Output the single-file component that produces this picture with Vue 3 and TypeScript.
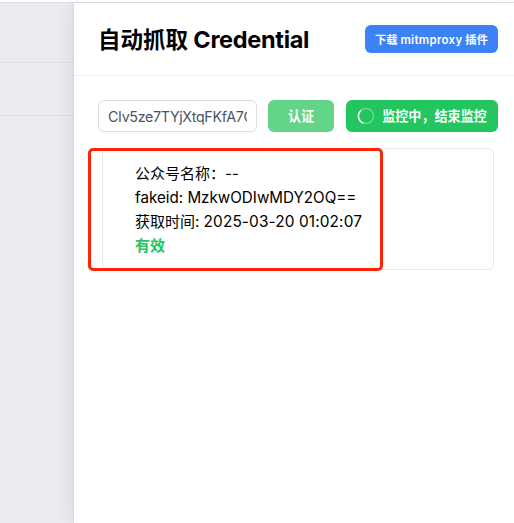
<script setup lang="ts">
import { ref } from 'vue'

interface Credential {
  nickname: string
  fakeid: string
  time: string
  valid: boolean
}

const token = ref('CIv5ze7TYjXtqFKfA7Q')
const credentials = ref<Credential[]>([
  { nickname: '--', fakeid: 'MzkwODIwMDY2OQ==', time: '2025-03-20 01:02:07', valid: true },
])
</script>

<template>
  <div class="page" lang="zh-CN">
    <aside class="backdrop">
      <div class="row first"></div>
      <div class="row second"></div>
    </aside>
    <main class="panel">
      <header class="header">
        <h1 class="title">自动抓取 <span class="title-latin">Credential</span></h1>
        <button class="btn download">下载 <span class="plugin">mitmproxy</span> 插件</button>
      </header>
      <section class="content">
        <div class="toolbar">
          <div class="input"><span class="value">{{ token }}</span></div>
          <button class="btn auth">认证</button>
          <button class="btn monitor">
            <svg class="spinner" viewBox="0 0 18 18" fill="none">
              <circle cx="9" cy="9" r="7.6" stroke="#fff" stroke-opacity=".3" stroke-width="1.5" />
              <path d="M6.4 16.1A7.6 7.6 0 0 1 4.1 3.2" stroke="#fff" stroke-width="1.5" />
            </svg>
            <span>监控中，结束监控</span>
          </button>
        </div>
        <div v-for="item in credentials" :key="item.fakeid" class="card">
          <p class="name">公众号名称：<span class="dashes">{{ item.nickname }}</span></p>
          <p class="fakeid">fakeid: {{ item.fakeid }}</p>
          <p class="time">获取时间: <span class="stamp">{{ item.time }}</span></p>
          <p v-if="item.valid" class="valid">有效</p>
          <div class="highlight"></div>
        </div>
      </section>
    </main>
  </div>
</template>

<style>
body {
  background: #fff;
}
</style>

<style scoped>
* {
  box-sizing: border-box;
}
.page {
  display: flex;
  width: 514px;
  height: 523px;
  overflow: hidden;
  border-top: 2px solid #fcfcfc;
  background: #ebecf0;
  font-family: Inter, "Noto Sans CJK SC", sans-serif;
  color: #000;
}
.backdrop {
  width: 74px;
  flex: none;
  border-top: 1px solid #e0e1e4;
}
.row {
  border-bottom: 1px solid #dfe0e4;
}
.first {
  height: 60px;
}
.second {
  height: 53px;
}
.panel {
  flex: 1;
  min-width: 0;
  margin-top: 1px;
  background: #fff;
  box-shadow: 0 0 2px rgb(0 0 0 / 14%), -3px 0 18px rgb(0 0 0 / 8%);
}
.header {
  display: flex;
  align-items: center;
  justify-content: space-between;
  height: 73px;
  padding: 0 16px 0 24px;
  border-bottom: 1px solid #f0f0f1;
}
.title {
  margin: 2px 0 0;
  font-size: 22.5px;
  line-height: 32px;
  font-weight: 700;
  white-space: nowrap;
}
.title-latin {
  font-size: 23.5px;
  font-weight: 650;
  letter-spacing: -0.3px;
}
.btn {
  display: flex;
  align-items: center;
  justify-content: center;
  flex: none;
  padding: 0;
  border: 0;
  border-radius: 6px;
  color: #fff;
  font: 600 13.1px/20px Inter, "Noto Sans CJK SC", sans-serif;
  white-space: pre;
}
.download {
  width: 133px;
  height: 28px;
  padding-top: 1px;
  background: #3b82f6;
  font-size: 11.3px;
}
.plugin {
  font-size: 11.5px;
  letter-spacing: 0.3px;
}
.content {
  padding: 24px 16px 0 24px;
}
.toolbar {
  display: flex;
  height: 32px;
}
.input {
  width: 159px;
  padding: 0 9px;
  border: 1px solid #dcdee4;
  border-radius: 6px;
  box-shadow: 0 1px 2px rgb(0 0 0 / 4%);
}
.value {
  display: block;
  overflow: hidden;
  color: #4b5563;
  font-size: 14.3px;
  letter-spacing: -0.35px;
  line-height: 31px;
  white-space: nowrap;
}
.auth {
  width: 66px;
  margin-left: 11px;
  background: #64d488;
}
.monitor {
  width: 152px;
  margin-left: 12px;
  background: #22c55e;
}
.spinner {
  width: 18px;
  height: 18px;
  margin-right: 7px;
}
.card {
  position: relative;
  width: 392px;
  height: 122px;
  margin: 16px 0 0 4px;
  padding: 13px 32px;
  border: 1px solid #e8e9eb;
  border-radius: 6px;
}
.card p {
  margin: 0;
  font-size: 15px;
  line-height: 24px;
  white-space: nowrap;
}
.card .fakeid {
  font-size: 15.2px;
}
.stamp {
  font-size: 15.4px;
  letter-spacing: 0.12px;
}
.card .valid {
  color: #22c55e;
  font-weight: 700;
}
.highlight {
  position: absolute;
  top: -1px;
  left: -15px;
  width: 295px;
  height: 123px;
  border: 3px solid #ff2608;
  border-radius: 5px;
}
</style>
